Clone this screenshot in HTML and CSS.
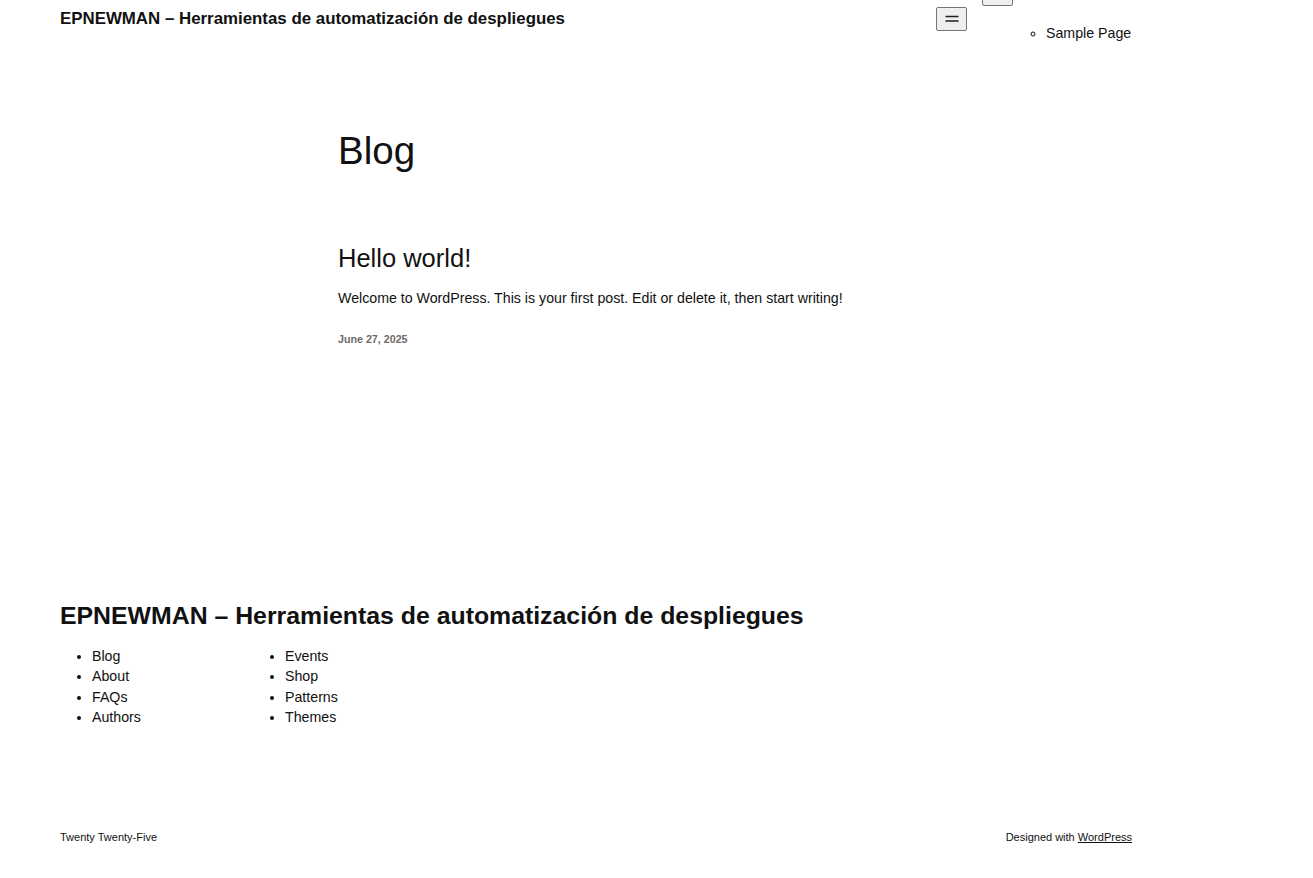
FILE: index.html
```html
<!DOCTYPE html>
<html lang="es">
<head>
<meta charset="utf-8">
<title>Blog – EPNEWMAN</title>
<link rel="stylesheet" href="styles.css">
</head>
<body>
<header class="site-header">
  <p class="site-title">EPNEWMAN – Herramientas de automatización de despliegues</p>
  <nav class="nav">
    <button class="nav-open" aria-label="Open menu">
      <svg width="24" height="24" viewBox="0 0 24 24" aria-hidden="true"><path d="M5.5 9.5h13M5.5 14h13" stroke="#1e1e1e" stroke-width="1.3" fill="none"/></svg>
    </button>
    <div class="nav-modal">
      <button class="nav-close" aria-label="Close menu"></button>
      <ul class="nav-list">
        <li class="nav-item">
          <ul class="nav-sub">
            <li>Sample Page</li>
          </ul>
        </li>
      </ul>
    </div>
  </nav>
</header>

<main class="main">
  <h1 class="page-title">Blog</h1>
  <article class="post">
    <h2 class="post-title">Hello world!</h2>
    <p class="post-excerpt">Welcome to WordPress. This is your first post. Edit or delete it, then start writing!</p>
    <p class="post-date">June 27, 2025</p>
  </article>
</main>

<footer class="site-footer">
  <p class="footer-title">EPNEWMAN – Herramientas de automatización de despliegues</p>
  <div class="footer-navs">
    <ul class="footer-list">
      <li>Blog</li>
      <li>About</li>
      <li>FAQs</li>
      <li>Authors</li>
    </ul>
    <ul class="footer-list">
      <li>Events</li>
      <li>Shop</li>
      <li>Patterns</li>
      <li>Themes</li>
    </ul>
  </div>
  <div class="footer-bottom">
    <p class="credit">Twenty Twenty-Five</p>
    <p class="credit">Designed with <a href="#" class="credit-link">WordPress</a></p>
  </div>
</footer>
</body>
</html>
```

FILE: styles.css
```css
html, body {
  margin: 0;
  padding: 0;
  background: #ffffff;
}
body {
  font-family: "Liberation Sans", Arial, sans-serif;
  color: #111111;
  width: 1072px;
  padding-left: 60px;
}
p { margin: 0; }

.site-header {
  display: flex;
  align-items: flex-start;
  justify-content: space-between;
  height: 48px;
}
.site-title {
  font-size: 16.87px;
  font-weight: 700;
  line-height: 22px;
  margin-top: 8px;
}
.nav {
  display: flex;
  align-items: flex-start;
  width: 196px;
}
.nav-open {
  width: 31px;
  height: 24px;
  margin-top: 7px;
  padding: 0;
  display: flex;
  align-items: center;
  justify-content: center;
  background: #efefef;
  border: 1px solid #767676;
  border-radius: 2px;
}
.nav-open svg { width: 24px; height: 24px; }
.nav-modal {
  margin-left: 15px;
  flex: 1;
  display: flex;
  flex-direction: column;
  align-items: flex-start;
}
.nav-close {
  width: 31px;
  height: 24px;
  margin-top: -18px;
  background: #efefef;
  border: 1px solid #767676;
  border-radius: 2px;
  padding: 0;
}
.nav-list {
  list-style: none;
  margin: 0;
  padding: 0;
  margin-top: 17px;
}
.nav-sub {
  list-style: circle;
  margin: 0;
  padding-left: 64px;
  font-size: 14.2px;
  line-height: 20px;
}

.main {
  padding-left: 278px;
  padding-top: 79px;
  height: 480px;
  box-sizing: border-box;
}
.page-title {
  margin: 0;
  font-size: 38.5px;
  font-weight: 400;
  line-height: 48px;
}
.post { margin-top: 68px; }
.post-title {
  margin: 0;
  font-size: 25.5px;
  font-weight: 400;
  line-height: 31px;
}
.post-excerpt {
  margin-top: 14px;
  font-size: 14.2px;
  line-height: 20px;
}
.post-date {
  margin-top: 24px;
  font-size: 10.7px;
  font-weight: 700;
  color: #6b6b6b;
  line-height: 14px;
}

.site-footer {
  padding-top: 72px;
}
.footer-title {
  font-size: 24.83px;
  font-weight: 700;
  line-height: 32px;
}
.footer-navs {
  display: flex;
  margin-top: 14px;
}
.footer-list {
  margin: 0;
  padding-left: 32px;
  width: 161px;
  font-size: 14.2px;
  line-height: 20.3px;
  list-style: disc;
}
.footer-bottom {
  display: flex;
  justify-content: space-between;
  margin-top: 103px;
}
.credit {
  font-size: 11px;
  line-height: 14px;
}
.credit-link {
  color: #111111;
  text-decoration: underline;
}
```
